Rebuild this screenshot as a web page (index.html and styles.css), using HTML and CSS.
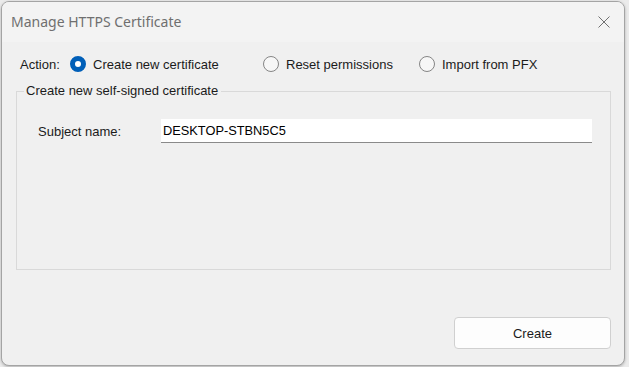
FILE: index.html
```html
<!DOCTYPE html>
<html lang="en">
<head>
  <meta charset="UTF-8">
  <title>Manage HTTPS Certificate</title>
  <link rel="stylesheet" href="styles.css">
</head>
<body>
  <div class="window">
    <div class="titlebar">
      <span class="title">Manage HTTPS Certificate</span>
      <span class="close-btn">
        <svg width="12" height="12" viewBox="0 0 12 12">
          <path d="M0.5 0.5 L11.5 11.5 M11.5 0.5 L0.5 11.5" stroke="#707070" stroke-width="1" fill="none"/>
        </svg>
      </span>
    </div>

    <div class="content">
      <!-- Action choice -->
      <div class="action-row">
        <span class="action-label">Action:</span>
        <label class="option option-first">
          <span class="radio checked"></span>Create new certificate
        </label>
        <label class="option option-second">
          <span class="radio"></span>Reset permissions
        </label>
        <label class="option">
          <span class="radio"></span>Import from PFX
        </label>
      </div>

      <!-- Group box -->
      <fieldset class="group">
        <legend>Create new self-signed certificate</legend>
        <div class="field-row">
          <span class="field-label">Subject name:</span>
          <div class="textbox">DESKTOP-STBN5C5</div>
        </div>
      </fieldset>

      <div class="footer">
        <button class="btn">Create</button>
      </div>
    </div>
  </div>
</body>
</html>
```

FILE: styles.css
```css
body {
  margin: 0;
  background: #ebebeb;
  font-family: "Liberation Sans", Arial, sans-serif;
  font-size: 13px;
  color: #1b1b1b;
}
.window {
  margin: 1px;
  width: 624px;
  height: 365px;
  box-sizing: border-box;
  border: 1px solid #a4a4a4;
  border-radius: 8px;
  background: #f0f0f0;
  display: flex;
  flex-direction: column;
  overflow: hidden;
  box-shadow: 0 1px 3px rgba(0, 0, 0, 0.25);
}
.titlebar {
  height: 40px;
  flex-shrink: 0;
  background: #f3f3f3;
  display: flex;
  align-items: center;
  justify-content: space-between;
}
.title {
  padding-left: 9px;
  padding-bottom: 2px;
  font-family: "Noto Sans", sans-serif;
  font-size: 14px;
  color: #6f6f6f;
}
.close-btn {
  width: 40px;
  display: flex;
  justify-content: center;
}
.content {
  flex: 1;
  display: flex;
  flex-direction: column;
  padding: 12px 13px 16px 14px;
}
.action-row {
  display: flex;
  align-items: center;
  height: 20px;
  padding-left: 4px;
}
.action-label {
  width: 50px;
}
.option {
  display: flex;
  align-items: center;
}
.option-first {
  width: 193px;
}
.option-second {
  width: 156px;
}
.radio {
  width: 16px;
  height: 16px;
  box-sizing: border-box;
  border-radius: 50%;
  border: 1px solid #858585;
  background: #f7f7f7;
  margin-right: 7px;
}
.radio.checked {
  border: 5px solid #005fb8;
  background: #ffffff;
}
.group {
  margin: 9px 0 0 0;
  padding: 0;
  height: 187px;
  box-sizing: border-box;
  border: 1px solid #d9d9d9;
  border-radius: 0;
}
.group legend {
  padding: 0 3px 0 2px;
  margin-left: 7px;
  line-height: 16px;
}
.field-row {
  display: flex;
  align-items: center;
  margin-top: 20px;
  padding-left: 21px;
}
.field-label {
  width: 123px;
}
.textbox {
  width: 431px;
  height: 24px;
  box-sizing: border-box;
  background: #ffffff;
  border-bottom: 1px solid #8a8a8a;
  padding: 4px 0 0 2px;
  font-size: 12.8px;
  color: #000000;
}
.footer {
  margin-top: auto;
  display: flex;
  justify-content: flex-end;
}
.btn {
  width: 157px;
  height: 32px;
  background: #fdfdfd;
  border: 1px solid #d0d0d0;
  border-radius: 4px;
  font-family: "Liberation Sans", Arial, sans-serif;
  font-size: 13px;
  color: #1b1b1b;
  padding: 0;
}
```
